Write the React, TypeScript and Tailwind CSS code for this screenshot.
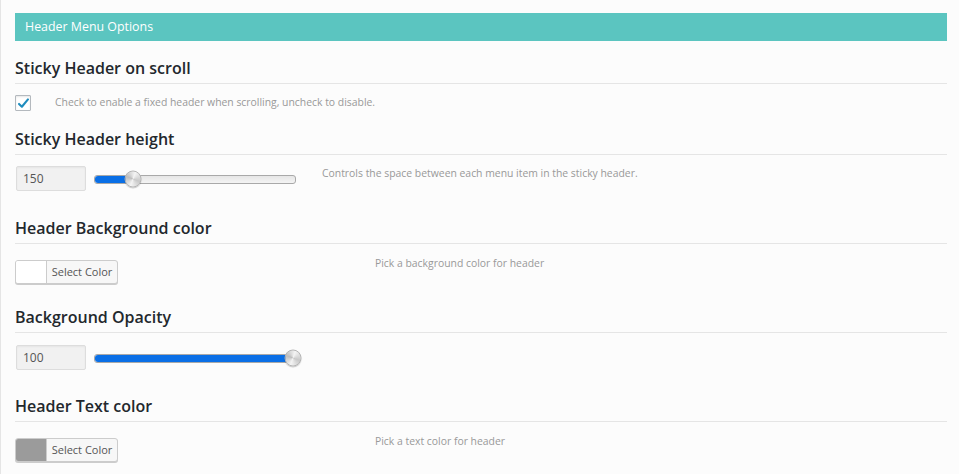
import React from 'react';

const font = { fontFamily: '"Open Sans", "Noto Sans", sans-serif' };

function Heading({ children, className = '' }: { children: React.ReactNode; className?: string }) {
  return (
    <h3 className={`text-[16px] h-[28px] leading-[25px] font-semibold text-[#23282d] border-b border-[#e5e5e5] ${className}`}>
      {children}
    </h3>
  );
}

function Slider({ value }: { value: number }) {
  return (
    <div className="relative ml-[8px] w-[202px] h-[9px] mt-[1px] rounded-[3px] border border-[#a9a9a9] bg-gradient-to-b from-[#e6e6e6] to-[#f4f4f4]">
      <div className="h-full rounded-l-[3px] bg-[#0a6fe6]" style={{ width: `${value}%` }} />
      <div
        className="absolute top-1/2 -translate-y-1/2 -translate-x-1/2 w-[17px] h-[17px] rounded-full border border-[#b5b5b5] bg-[conic-gradient(from_200deg,#f4f4f4,#bdbdbd,#f4f4f4,#c8c8c8,#f4f4f4)] shadow-[0_1px_1px_rgba(0,0,0,0.2)]"
        style={{ left: `${value}%` }}
      />
    </div>
  );
}

function NumberBox({ value }: { value: string }) {
  return (
    <div className="w-[70px] h-[25px] ml-[1px] flex items-center px-[6px] text-[12px] text-[#555] bg-[#f1f1f1] border border-[#dddddd] rounded-[2px] shadow-[inset_0_1px_2px_rgba(0,0,0,0.05)]">
      {value}
    </div>
  );
}

function ColorButton({ swatch }: { swatch: string }) {
  return (
    <div className="flex w-[103px] h-[24px] border border-[#cccccc] rounded-[3px] overflow-hidden bg-[#f7f7f7] shadow-[0_1px_0_#ccc]">
      <div className={`w-[31px] h-full border-r border-[#cccccc] ${swatch}`} />
      <div className="flex-1 flex items-center justify-center text-[11px] text-[#555]">Select Color</div>
    </div>
  );
}

export default function App() {
  return (
    <div className="min-h-[474px] bg-[#fcfcfc] border-l border-[#e5e5e5] pl-[14px] pr-[12px] pt-[13px]" style={font}>
      <div className="h-[28px] bg-[#5bc5c0] flex items-center px-[10px] text-[12.4px] text-white">
        Header Menu Options
      </div>

      <Heading className="mt-[15px]">Sticky Header on scroll</Heading>
      <div className="flex items-center mt-[11px]">
        <div className="w-[16px] h-[16px] border border-[#b4b9be] bg-white rounded-[1px] flex items-center justify-center shadow-[inset_0_1px_2px_rgba(0,0,0,0.1)]">
          <svg width="13" height="13" viewBox="0 0 16 16">
            <path d="M2.5 8.5 L6 12 L13.5 3" fill="none" stroke="#1e8cbe" strokeWidth="2.6" strokeLinecap="round" strokeLinejoin="round" />
          </svg>
        </div>
        <span className="ml-[24px] text-[10.4px] text-[#999]">Check to enable a fixed header when scrolling, uncheck to disable.</span>
      </div>

      <Heading className="mt-[16px]">Sticky Header height</Heading>
      <div className="flex items-start mt-[11px]">
        <NumberBox value="150" />
        <div className="h-[25px] flex items-center">
          <Slider value={19} />
        </div>
        <span className="ml-[26px] text-[10.4px] text-[#999]">Controls the space between each menu item in the sticky header.</span>
      </div>

      <Heading className="mt-[25px]">Header Background color</Heading>
      <div className="flex items-start mt-[16px]">
        <ColorButton swatch="bg-white" />
        <span className="ml-[257px] -mt-[4px] text-[10.4px] text-[#999]">Pick a background color for header</span>
      </div>

      <Heading className="mt-[21px]">Background Opacity</Heading>
      <div className="flex items-start mt-[12px]">
        <NumberBox value="100" />
        <div className="h-[25px] flex items-center">
          <Slider value={99} />
        </div>
      </div>

      <Heading className="mt-[24px]">Header Text color</Heading>
      <div className="flex items-start mt-[16px]">
        <ColorButton swatch="bg-[#9b9b9b]" />
        <span className="ml-[257px] -mt-[4px] text-[10.4px] text-[#999]">Pick a text color for header</span>
      </div>
    </div>
  );
}
